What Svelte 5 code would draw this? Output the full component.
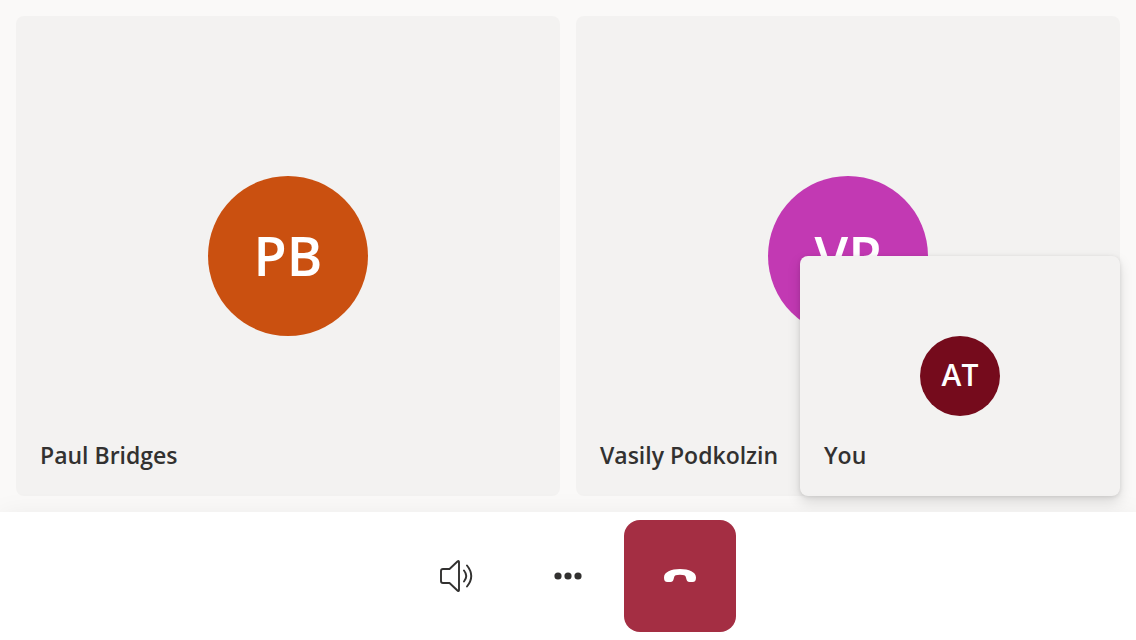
<script>
  const people = [
    { name: 'Paul Bridges', initials: 'PB', tone: 'orange' },
    { name: 'Vasily Podkolzin', initials: 'VP', tone: 'magenta' }
  ];
</script>

<div class="call">
  <main class="stage">
    {#each people as p}
      <section class="tile">
        <div class="avatar {p.tone}">{p.initials}</div>
        <span class="name">{p.name}</span>
      </section>
    {/each}
    <section class="self">
      <div class="avatar small wine">AT</div>
      <span class="name">You</span>
    </section>
  </main>
  <footer class="controls">
    <button aria-label="Speaker">
      <svg width="40" height="40" viewBox="0 0 40 40" fill="none" stroke="#323130" stroke-width="1.9" stroke-linecap="round" stroke-linejoin="round">
        <path d="M23 6Q23 4.300 21.700 5.300L13.500 13H7Q5 13 5 15V25Q5 27 7 27H13.500L21.700 34.700Q23 35.700 23 34Z" />
        <path d="M28 14.500Q32.500 20 28 25.500M31 9.500Q39.500 20 31 30.500" />
      </svg>
    </button>
    <button aria-label="More options">
      <svg width="40" height="40" viewBox="0 0 40 40" fill="#323130">
        <circle cx="10" cy="20" r="3.600" /><circle cx="20" cy="20" r="3.600" /><circle cx="30" cy="20" r="3.600" />
      </svg>
    </button>
    <button class="hangup" aria-label="Hang up">
      <svg width="40" height="40" viewBox="0 0 40 40" fill="#fff">
        <path d="M20 13C29 13 36 16 36 21.500C36 24.500 35 26 32.500 26H29.500C27.500 26 27 25 26.500 23.500L25.800 21C25.500 19.500 24 18.800 20 18.800C16 18.800 14.500 19.500 14.200 21L13.500 23.500C13 25 12.500 26 10.500 26H7.500C5 26 4 24.500 4 21.500C4 16 11 13 20 13Z" />
      </svg>
    </button>
  </footer>
</div>

<style>
  :global(body) { margin: 0; }
  .call {
    min-height: 100vh;
    display: flex;
    flex-direction: column;
    background: #faf9f8;
    color: #323130;
    font-family: "Open Sans", "Noto Sans", sans-serif;
  }
  .stage {
    position: relative;
    flex: 1;
    display: grid;
    grid-template-columns: 1fr 1fr;
    gap: 16px;
    padding: 16px;
  }
  .tile, .self {
    position: relative;
    display: grid;
    place-items: center;
    background: #f3f2f1;
    border-radius: 8px;
  }
  .self {
    position: absolute;
    right: 16px;
    bottom: 16px;
    width: 320px;
    height: 240px;
    box-shadow: 0 6px 14px rgba(0, 0, 0, 0.13), 0 1px 4px rgba(0, 0, 0, 0.11);
  }
  .avatar {
    display: grid;
    place-items: center;
    box-sizing: border-box;
    width: 160px;
    height: 160px;
    padding-bottom: 2px;
    border-radius: 50%;
    color: #fff;
    font-size: 54px;
    font-weight: 600;
    line-height: 1;
  }
  .small { width: 80px; height: 80px; font-size: 30px; }
  .orange { background: #ca5010; }
  .magenta { background: #c239b3; }
  .wine { background: #750b1c; }
  .name {
    position: absolute;
    left: 24px;
    bottom: 24px;
    font-size: 23px;
    line-height: 34px;
    font-weight: 600;
    white-space: nowrap;
  }
  .controls {
    position: relative;
    display: flex;
    justify-content: center;
    padding: 8px;
    background: #fff;
    box-shadow: 0 6px 28px rgba(0, 0, 0, 0.08);
  }
  button {
    display: grid;
    place-items: center;
    width: 112px;
    height: 112px;
    padding: 0;
    border: 0;
    border-radius: 16px;
    background: transparent;
  }
  .hangup { background: #a42e43; }
</style>
